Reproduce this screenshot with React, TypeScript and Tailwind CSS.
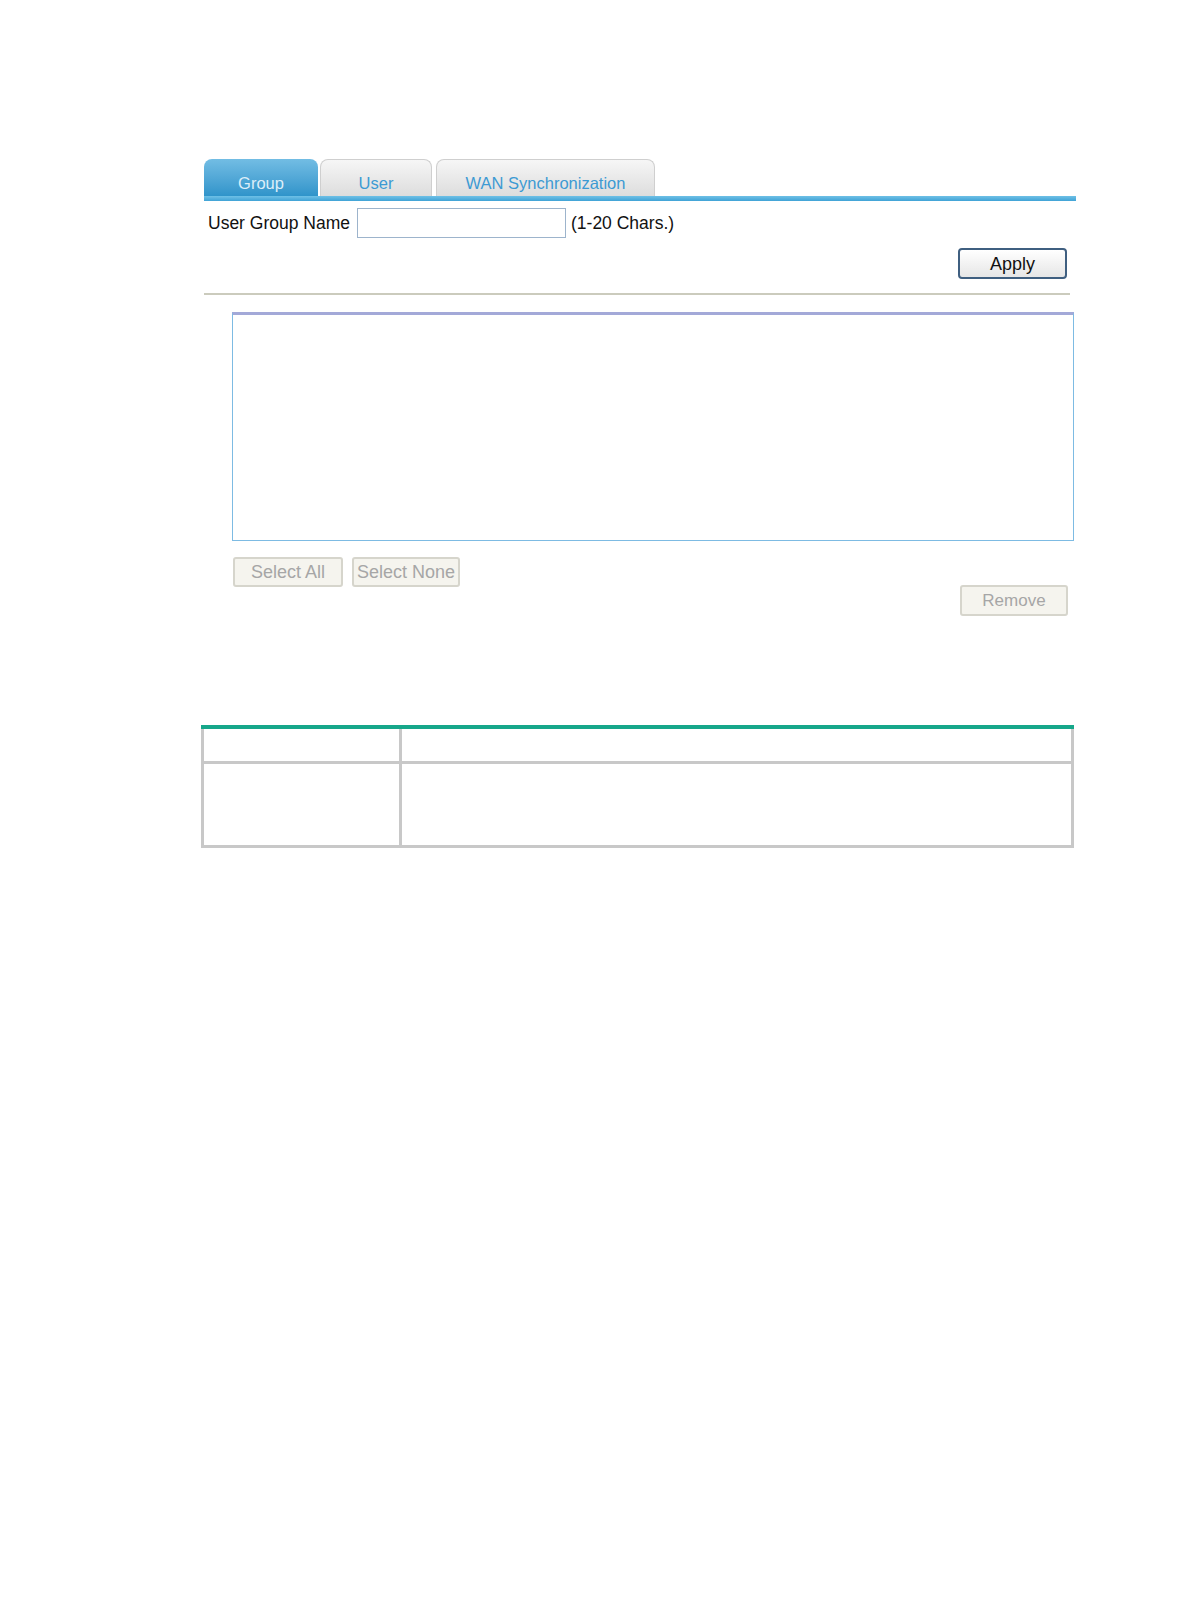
import React from "react";

const font = { fontFamily: '"Liberation Sans", Arial, sans-serif' };

export default function App() {
  return (
    <div className="min-h-[1616px] w-[1190px] bg-white" style={font}>
      <div className="pl-[204px] pt-[159px]">
        <div className="w-[872px]">
          {/* Tabs */}
          <div className="flex items-end">
            <div className="h-[37px] w-[114px] rounded-t-[8px] bg-gradient-to-b from-[#72bde4] to-[#2f94ca] text-center text-[16.5px] leading-[18px] text-[#dceef9] pt-[15px]">
              Group
            </div>
            <div className="ml-[2px] h-[37px] w-[112px] rounded-t-[8px] border border-b-0 border-[#cfcfcf] bg-gradient-to-b from-[#f6f6f6] to-[#dddddd] text-center text-[16.5px] leading-[18px] text-[#3d9ad3] pt-[14px]">
              User
            </div>
            <div className="ml-[4px] h-[37px] w-[219px] rounded-t-[8px] border border-b-0 border-[#cfcfcf] bg-gradient-to-b from-[#f6f6f6] to-[#dddddd] text-center text-[16.5px] leading-[18px] text-[#3d9ad3] pt-[14px]">
              WAN Synchronization
            </div>
          </div>
          <div className="h-[5px] w-[872px] bg-gradient-to-b from-[#6ec0e6] to-[#3fa3d6]" />

          {/* Name row */}
          <div className="mt-[7px] flex items-center text-[17.5px] text-[#111]">
            <span className="ml-[4px]">User Group Name</span>
            <div className="ml-[7px] h-[30px] w-[209px] border border-[#9db4cc] bg-white" />
            <span className="ml-[5px]">(1-20 Chars.)</span>
          </div>

          {/* Apply */}
          <div className="mt-[10px] flex justify-end pr-[9px]">
            <button className="h-[31px] w-[109px] rounded-[4px] border-2 border-[#3f5f80] bg-gradient-to-b from-white to-[#e6e6e6] text-[18px] leading-none text-[#111]">
              Apply
            </button>
          </div>

          {/* Separator */}
          <div className="mt-[14px] h-[2px] w-[866px] bg-[#cbcbbd]" />

          {/* List box */}
          <div className="ml-[28px] mt-[17px] h-[229px] w-[842px] border border-t-[3px] border-[#7dbbe3] border-t-[#a3a9d8] bg-white" />

          {/* Buttons */}
          <div className="ml-[29px] mt-[16px] flex h-[59px] w-[835px] justify-between">
            <div className="flex items-start gap-[9px]">
              <button className="h-[30px] w-[110px] rounded-[3px] border-2 border-[#d6d5cc] bg-[#f5f4ee] text-[18px] leading-none text-[#a6a6a6]">
                Select All
              </button>
              <button className="h-[30px] w-[108px] rounded-[3px] border-2 border-[#d6d5cc] bg-[#f5f4ee] text-[18px] leading-none text-[#a6a6a6]">
                Select None
              </button>
            </div>
            <div className="flex items-end">
              <button className="h-[31px] w-[108px] rounded-[3px] border-2 border-[#d6d5cc] bg-[#f5f4ee] text-[17px] leading-none text-[#a6a6a6]">
                Remove
              </button>
            </div>
          </div>

          {/* Table */}
          <div className="-ml-[3px] mt-[109px] w-[873px] border-t-4 border-[#16a78a]">
            <div className="border-x-[3px] border-b-[3px] border-[#c8c8c8]">
              <div className="flex h-[35px] border-b-[3px] border-[#c8c8c8]">
                <div className="w-[198px] border-r-[3px] border-[#c8c8c8]" />
                <div className="flex-1" />
              </div>
              <div className="flex h-[81px]">
                <div className="w-[198px] border-r-[3px] border-[#c8c8c8]" />
                <div className="flex-1" />
              </div>
            </div>
          </div>
        </div>
      </div>
    </div>
  );
}
